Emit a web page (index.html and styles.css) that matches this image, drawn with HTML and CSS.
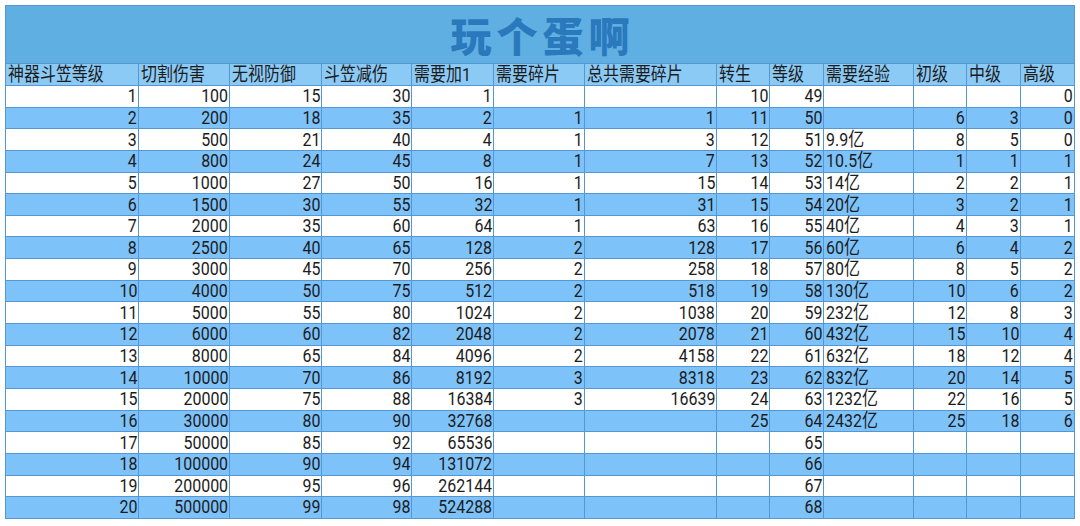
FILE: index.html
```html
<!DOCTYPE html>
<html lang="zh-CN">
<head>
<meta charset="utf-8">
<title>玩个蛋啊</title>
<link rel="stylesheet" href="styles.css">
</head>
<body>
<div class="sheet">
  <div class="title">玩个蛋啊</div>
  <div class="row head">
    <div class="c"><span>神器斗笠等级</span></div><div class="c"><span>切割伤害</span></div><div class="c"><span>无视防御</span></div><div class="c"><span>斗笠减伤</span></div><div class="c"><span>需要加1</span></div><div class="c"><span>需要碎片</span></div><div class="c"><span>总共需要碎片</span></div><div class="c"><span>转生</span></div><div class="c"><span>等级</span></div><div class="c"><span>需要经验</span></div><div class="c"><span>初级</span></div><div class="c"><span>中级</span></div><div class="c"><span>高级</span></div>
  </div>
  <div class="row">
    <div class="c n"><span>1</span></div><div class="c n"><span>100</span></div><div class="c n"><span>15</span></div><div class="c n"><span>30</span></div><div class="c n"><span>1</span></div><div class="c"></div><div class="c"></div><div class="c n"><span>10</span></div><div class="c n"><span>49</span></div><div class="c"></div><div class="c"></div><div class="c"></div><div class="c n"><span>0</span></div>
  </div>
  <div class="row b">
    <div class="c n"><span>2</span></div><div class="c n"><span>200</span></div><div class="c n"><span>18</span></div><div class="c n"><span>35</span></div><div class="c n"><span>2</span></div><div class="c n"><span>1</span></div><div class="c n"><span>1</span></div><div class="c n"><span>11</span></div><div class="c n"><span>50</span></div><div class="c"></div><div class="c n"><span>6</span></div><div class="c n"><span>3</span></div><div class="c n"><span>0</span></div>
  </div>
  <div class="row">
    <div class="c n"><span>3</span></div><div class="c n"><span>500</span></div><div class="c n"><span>21</span></div><div class="c n"><span>40</span></div><div class="c n"><span>4</span></div><div class="c n"><span>1</span></div><div class="c n"><span>3</span></div><div class="c n"><span>12</span></div><div class="c n"><span>51</span></div><div class="c"><span>9.9亿</span></div><div class="c n"><span>8</span></div><div class="c n"><span>5</span></div><div class="c n"><span>0</span></div>
  </div>
  <div class="row b">
    <div class="c n"><span>4</span></div><div class="c n"><span>800</span></div><div class="c n"><span>24</span></div><div class="c n"><span>45</span></div><div class="c n"><span>8</span></div><div class="c n"><span>1</span></div><div class="c n"><span>7</span></div><div class="c n"><span>13</span></div><div class="c n"><span>52</span></div><div class="c"><span>10.5亿</span></div><div class="c n"><span>1</span></div><div class="c n"><span>1</span></div><div class="c n"><span>1</span></div>
  </div>
  <div class="row">
    <div class="c n"><span>5</span></div><div class="c n"><span>1000</span></div><div class="c n"><span>27</span></div><div class="c n"><span>50</span></div><div class="c n"><span>16</span></div><div class="c n"><span>1</span></div><div class="c n"><span>15</span></div><div class="c n"><span>14</span></div><div class="c n"><span>53</span></div><div class="c"><span>14亿</span></div><div class="c n"><span>2</span></div><div class="c n"><span>2</span></div><div class="c n"><span>1</span></div>
  </div>
  <div class="row b">
    <div class="c n"><span>6</span></div><div class="c n"><span>1500</span></div><div class="c n"><span>30</span></div><div class="c n"><span>55</span></div><div class="c n"><span>32</span></div><div class="c n"><span>1</span></div><div class="c n"><span>31</span></div><div class="c n"><span>15</span></div><div class="c n"><span>54</span></div><div class="c"><span>20亿</span></div><div class="c n"><span>3</span></div><div class="c n"><span>2</span></div><div class="c n"><span>1</span></div>
  </div>
  <div class="row">
    <div class="c n"><span>7</span></div><div class="c n"><span>2000</span></div><div class="c n"><span>35</span></div><div class="c n"><span>60</span></div><div class="c n"><span>64</span></div><div class="c n"><span>1</span></div><div class="c n"><span>63</span></div><div class="c n"><span>16</span></div><div class="c n"><span>55</span></div><div class="c"><span>40亿</span></div><div class="c n"><span>4</span></div><div class="c n"><span>3</span></div><div class="c n"><span>1</span></div>
  </div>
  <div class="row b">
    <div class="c n"><span>8</span></div><div class="c n"><span>2500</span></div><div class="c n"><span>40</span></div><div class="c n"><span>65</span></div><div class="c n"><span>128</span></div><div class="c n"><span>2</span></div><div class="c n"><span>128</span></div><div class="c n"><span>17</span></div><div class="c n"><span>56</span></div><div class="c"><span>60亿</span></div><div class="c n"><span>6</span></div><div class="c n"><span>4</span></div><div class="c n"><span>2</span></div>
  </div>
  <div class="row">
    <div class="c n"><span>9</span></div><div class="c n"><span>3000</span></div><div class="c n"><span>45</span></div><div class="c n"><span>70</span></div><div class="c n"><span>256</span></div><div class="c n"><span>2</span></div><div class="c n"><span>258</span></div><div class="c n"><span>18</span></div><div class="c n"><span>57</span></div><div class="c"><span>80亿</span></div><div class="c n"><span>8</span></div><div class="c n"><span>5</span></div><div class="c n"><span>2</span></div>
  </div>
  <div class="row b">
    <div class="c n"><span>10</span></div><div class="c n"><span>4000</span></div><div class="c n"><span>50</span></div><div class="c n"><span>75</span></div><div class="c n"><span>512</span></div><div class="c n"><span>2</span></div><div class="c n"><span>518</span></div><div class="c n"><span>19</span></div><div class="c n"><span>58</span></div><div class="c"><span>130亿</span></div><div class="c n"><span>10</span></div><div class="c n"><span>6</span></div><div class="c n"><span>2</span></div>
  </div>
  <div class="row">
    <div class="c n"><span>11</span></div><div class="c n"><span>5000</span></div><div class="c n"><span>55</span></div><div class="c n"><span>80</span></div><div class="c n"><span>1024</span></div><div class="c n"><span>2</span></div><div class="c n"><span>1038</span></div><div class="c n"><span>20</span></div><div class="c n"><span>59</span></div><div class="c"><span>232亿</span></div><div class="c n"><span>12</span></div><div class="c n"><span>8</span></div><div class="c n"><span>3</span></div>
  </div>
  <div class="row b">
    <div class="c n"><span>12</span></div><div class="c n"><span>6000</span></div><div class="c n"><span>60</span></div><div class="c n"><span>82</span></div><div class="c n"><span>2048</span></div><div class="c n"><span>2</span></div><div class="c n"><span>2078</span></div><div class="c n"><span>21</span></div><div class="c n"><span>60</span></div><div class="c"><span>432亿</span></div><div class="c n"><span>15</span></div><div class="c n"><span>10</span></div><div class="c n"><span>4</span></div>
  </div>
  <div class="row">
    <div class="c n"><span>13</span></div><div class="c n"><span>8000</span></div><div class="c n"><span>65</span></div><div class="c n"><span>84</span></div><div class="c n"><span>4096</span></div><div class="c n"><span>2</span></div><div class="c n"><span>4158</span></div><div class="c n"><span>22</span></div><div class="c n"><span>61</span></div><div class="c"><span>632亿</span></div><div class="c n"><span>18</span></div><div class="c n"><span>12</span></div><div class="c n"><span>4</span></div>
  </div>
  <div class="row b">
    <div class="c n"><span>14</span></div><div class="c n"><span>10000</span></div><div class="c n"><span>70</span></div><div class="c n"><span>86</span></div><div class="c n"><span>8192</span></div><div class="c n"><span>3</span></div><div class="c n"><span>8318</span></div><div class="c n"><span>23</span></div><div class="c n"><span>62</span></div><div class="c"><span>832亿</span></div><div class="c n"><span>20</span></div><div class="c n"><span>14</span></div><div class="c n"><span>5</span></div>
  </div>
  <div class="row">
    <div class="c n"><span>15</span></div><div class="c n"><span>20000</span></div><div class="c n"><span>75</span></div><div class="c n"><span>88</span></div><div class="c n"><span>16384</span></div><div class="c n"><span>3</span></div><div class="c n"><span>16639</span></div><div class="c n"><span>24</span></div><div class="c n"><span>63</span></div><div class="c"><span>1232亿</span></div><div class="c n"><span>22</span></div><div class="c n"><span>16</span></div><div class="c n"><span>5</span></div>
  </div>
  <div class="row b">
    <div class="c n"><span>16</span></div><div class="c n"><span>30000</span></div><div class="c n"><span>80</span></div><div class="c n"><span>90</span></div><div class="c n"><span>32768</span></div><div class="c"></div><div class="c"></div><div class="c n"><span>25</span></div><div class="c n"><span>64</span></div><div class="c"><span>2432亿</span></div><div class="c n"><span>25</span></div><div class="c n"><span>18</span></div><div class="c n"><span>6</span></div>
  </div>
  <div class="row">
    <div class="c n"><span>17</span></div><div class="c n"><span>50000</span></div><div class="c n"><span>85</span></div><div class="c n"><span>92</span></div><div class="c n"><span>65536</span></div><div class="c"></div><div class="c"></div><div class="c"></div><div class="c n"><span>65</span></div><div class="c"></div><div class="c"></div><div class="c"></div><div class="c"></div>
  </div>
  <div class="row b">
    <div class="c n"><span>18</span></div><div class="c n"><span>100000</span></div><div class="c n"><span>90</span></div><div class="c n"><span>94</span></div><div class="c n"><span>131072</span></div><div class="c"></div><div class="c"></div><div class="c"></div><div class="c n"><span>66</span></div><div class="c"></div><div class="c"></div><div class="c"></div><div class="c"></div>
  </div>
  <div class="row">
    <div class="c n"><span>19</span></div><div class="c n"><span>200000</span></div><div class="c n"><span>95</span></div><div class="c n"><span>96</span></div><div class="c n"><span>262144</span></div><div class="c"></div><div class="c"></div><div class="c"></div><div class="c n"><span>67</span></div><div class="c"></div><div class="c"></div><div class="c"></div><div class="c"></div>
  </div>
  <div class="row b">
    <div class="c n"><span>20</span></div><div class="c n"><span>500000</span></div><div class="c n"><span>99</span></div><div class="c n"><span>98</span></div><div class="c n"><span>524288</span></div><div class="c"></div><div class="c"></div><div class="c"></div><div class="c n"><span>68</span></div><div class="c"></div><div class="c"></div><div class="c"></div><div class="c"></div>
  </div>
</div>
</body>
</html>
```

FILE: styles.css
```css
html, body {
  margin: 0;
  padding: 0;
  background: #ffffff;
}

body {
  padding: 5px;
  font-family: Roboto, "Noto Sans CJK SC", sans-serif;
  color: #1c1c1c;
}

.sheet {
  width: 1069px;
  border-left: 1px solid #5597d4;
  border-top: 1px solid #5597d4;
}

.title {
  box-sizing: border-box;
  height: 58px;
  display: flex;
  align-items: center;
  justify-content: center;
  padding-left: 5px;
  background: #60afe3;
  border-right: 1px solid #5597d4;
  border-bottom: 1px solid #5597d4;
  color: #2a79bd;
  font-family: "Noto Sans CJK SC", sans-serif;
  font-weight: 900;
  font-size: 41px;
  line-height: 1;
  letter-spacing: 5px;
}

.row {
  box-sizing: border-box;
  display: grid;
  grid-template-columns: 133px 91px 92px 90px 82px 91px 132px 53px 54px 90px 53px 54px 54px;
  height: 21.65px;
  border-bottom: 1px solid #5597d4;
  background: #ffffff;
}

.row.head {
  height: 22px;
  background: #8ccaf6;
}

.row.b {
  background: #7ec2fa;
}

.c {
  box-sizing: border-box;
  display: flex;
  align-items: center;
  justify-content: flex-start;
  padding: 0 1px 0 2px;
  border-right: 1px solid #5597d4;
  font-size: 19px;
  line-height: 20px;
  overflow: visible;
  white-space: nowrap;
}

.c span {
  display: inline-block;
  transform: scaleX(0.84);
  transform-origin: left center;
}

.c.n {
  justify-content: flex-end;
}

.c.n span {
  transform-origin: right center;
}
```
